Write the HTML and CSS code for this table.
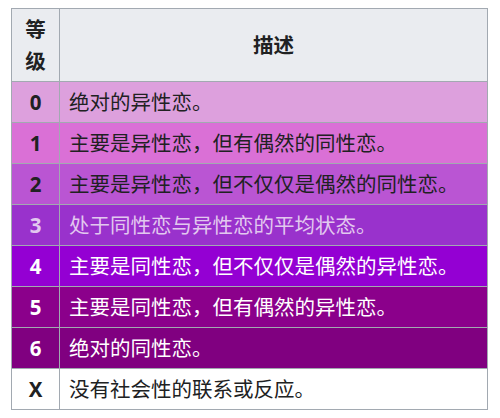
FILE: index.html
```html
<!DOCTYPE html>
<html lang="zh">
<head>
<meta charset="utf-8">
<link rel="stylesheet" href="styles.css">
</head>
<body>
<table class="scale">
  <colgroup><col class="c-num"><col class="c-desc"></colgroup>
  <thead>
    <tr><th class="num">等级</th><th>描述</th></tr>
  </thead>
  <tbody>
    <tr class="r0"><td class="num">0</td><td>绝对的异性恋。</td></tr>
    <tr class="r1"><td class="num">1</td><td>主要是异性恋，但有偶然的同性恋。</td></tr>
    <tr class="r2"><td class="num">2</td><td>主要是异性恋，但不仅仅是偶然的同性恋。</td></tr>
    <tr class="r3"><td class="num">3</td><td>处于同性恋与异性恋的平均状态。</td></tr>
    <tr class="r4"><td class="num">4</td><td>主要是同性恋，但不仅仅是偶然的异性恋。</td></tr>
    <tr class="r5"><td class="num">5</td><td>主要是同性恋，但有偶然的异性恋。</td></tr>
    <tr class="r6"><td class="num">6</td><td>绝对的同性恋。</td></tr>
    <tr class="rx"><td class="num">X</td><td>没有社会性的联系或反应。</td></tr>
  </tbody>
</table>
</body>
</html>
```
FILE: styles.css
```css
html, body {
  background: #ffffff;
}
body {
  margin: 8px 0 0 11px;
  font-family: "Noto Sans", "Noto Sans CJK SC", sans-serif;
  font-size: 20.5px;
  color: #202122;
}
.scale {
  border-collapse: collapse;
  table-layout: fixed;
  width: 477px;
}
.c-num { width: 48px; }
.scale th, .scale td {
  border: 1px solid #a2a9b1;
  padding: 4px 9px;
  line-height: 32px;
  height: 32px;
  box-sizing: content-box;
}
.scale th {
  background: #eaecf0;
  font-weight: bold;
  text-align: center;
}
.scale th.num {
  padding: 4px 8px;
}
.scale td.num {
  text-align: center;
  font-weight: bold;
  padding: 4px 6px;
}
.r0 { background: #dda0dd; }
.r1 { background: #da70d6; }
.r2 { background: #ba55d3; }
.r3 { background: #9932cc; color: #e2c8ef; }
.r4 { background: #9400d3; color: #ffffff; }
.r5 { background: #8b008b; color: #ffffff; }
.r6 { background: #800080; color: #ffffff; }
.rx { background: #ffffff; }
```
